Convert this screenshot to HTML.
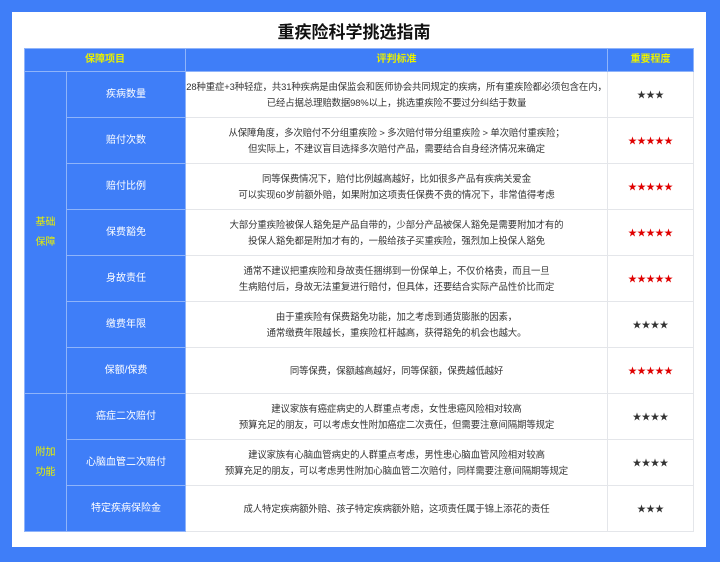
<!DOCTYPE html>
<html><head><meta charset="utf-8"><style>
*{margin:0;padding:0;box-sizing:border-box}
body{width:720px;height:562px;background:#3f7ef8;font-family:"Liberation Sans","Noto Sans CJK SC",sans-serif;position:relative;overflow:hidden}
.w{position:absolute;left:12px;top:12px;width:694px;height:535px;background:#fff}
h1{position:absolute;left:0;top:18px;width:708px;text-align:center;font-size:17px;font-weight:bold;color:#111}
table{position:absolute;left:24px;top:48px;border-collapse:collapse;table-layout:fixed;width:669px}
td{text-align:center;vertical-align:middle;font-size:10px;border:1px solid #e4e6ea;line-height:16px;color:#333;height:46px;white-space:nowrap;overflow:hidden;padding:0}
td.t{font-size:9.4px;letter-spacing:-0.1px}
.hd td{background:#3f7ef8;color:#e8f000;font-weight:bold;height:23px;border-color:#8fb4fa}
.b{background:#3f7ef8;color:#fff;border-color:#8fb4fa}
.g{background:#3f7ef8;color:#e8f000;border-color:#8fb4fa;line-height:20px}
.s{font-size:9px;letter-spacing:0}
.r{color:#e00000}
</style></head><body>
<div class="w"></div>
<h1>重疾险科学挑选指南</h1>
<table>
<col style="width:42px"><col style="width:119px"><col style="width:422px"><col style="width:86px">
<tr class="hd"><td colspan="2">保障项目</td><td>评判标准</td><td>重要程度</td></tr>
<tr><td class="g" rowspan="7">基础<br>保障</td><td class="b">疾病数量</td><td class="t">28种重症+3种轻症，共31种疾病是由保监会和医师协会共同规定的疾病，所有重疾险都必须包含在内，<br>已经占据总理赔数据98%以上，挑选重疾险不要过分纠结于数量</td><td class="s">★★★</td></tr>
<tr><td class="b">赔付次数</td><td class="t">从保障角度，多次赔付不分组重疾险 &gt; 多次赔付带分组重疾险 &gt; 单次赔付重疾险；<br>但实际上，不建议盲目选择多次赔付产品，需要结合自身经济情况来确定</td><td class="s r">★★★★★</td></tr>
<tr><td class="b">赔付比例</td><td class="t">同等保费情况下，赔付比例越高越好，比如很多产品有疾病关爱金<br>可以实现60岁前额外赔，如果附加这项责任保费不贵的情况下，非常值得考虑</td><td class="s r">★★★★★</td></tr>
<tr><td class="b">保费豁免</td><td class="t">大部分重疾险被保人豁免是产品自带的，少部分产品被保人豁免是需要附加才有的<br>投保人豁免都是附加才有的，一般给孩子买重疾险，强烈加上投保人豁免</td><td class="s r">★★★★★</td></tr>
<tr><td class="b">身故责任</td><td class="t">通常不建议把重疾险和身故责任捆绑到一份保单上，不仅价格贵，而且一旦<br>生病赔付后，身故无法重复进行赔付，但具体，还要结合实际产品性价比而定</td><td class="s r">★★★★★</td></tr>
<tr><td class="b">缴费年限</td><td class="t">由于重疾险有保费豁免功能，加之考虑到通货膨胀的因素，<br>通常缴费年限越长，重疾险杠杆越高，获得豁免的机会也越大。</td><td class="s">★★★★</td></tr>
<tr><td class="b">保额/保费</td><td class="t">同等保费，保额越高越好，同等保额，保费越低越好</td><td class="s r">★★★★★</td></tr>
<tr><td class="g" rowspan="3">附加<br>功能</td><td class="b">癌症二次赔付</td><td class="t">建议家族有癌症病史的人群重点考虑，女性患癌风险相对较高<br>预算充足的朋友，可以考虑女性附加癌症二次责任，但需要注意间隔期等规定</td><td class="s">★★★★</td></tr>
<tr><td class="b">心脑血管二次赔付</td><td class="t">建议家族有心脑血管病史的人群重点考虑，男性患心脑血管风险相对较高<br>预算充足的朋友，可以考虑男性附加心脑血管二次赔付，同样需要注意间隔期等规定</td><td class="s">★★★★</td></tr>
<tr><td class="b">特定疾病保险金</td><td class="t">成人特定疾病额外赔、孩子特定疾病额外赔，这项责任属于锦上添花的责任</td><td class="s">★★★</td></tr>
</table>
</body></html>
